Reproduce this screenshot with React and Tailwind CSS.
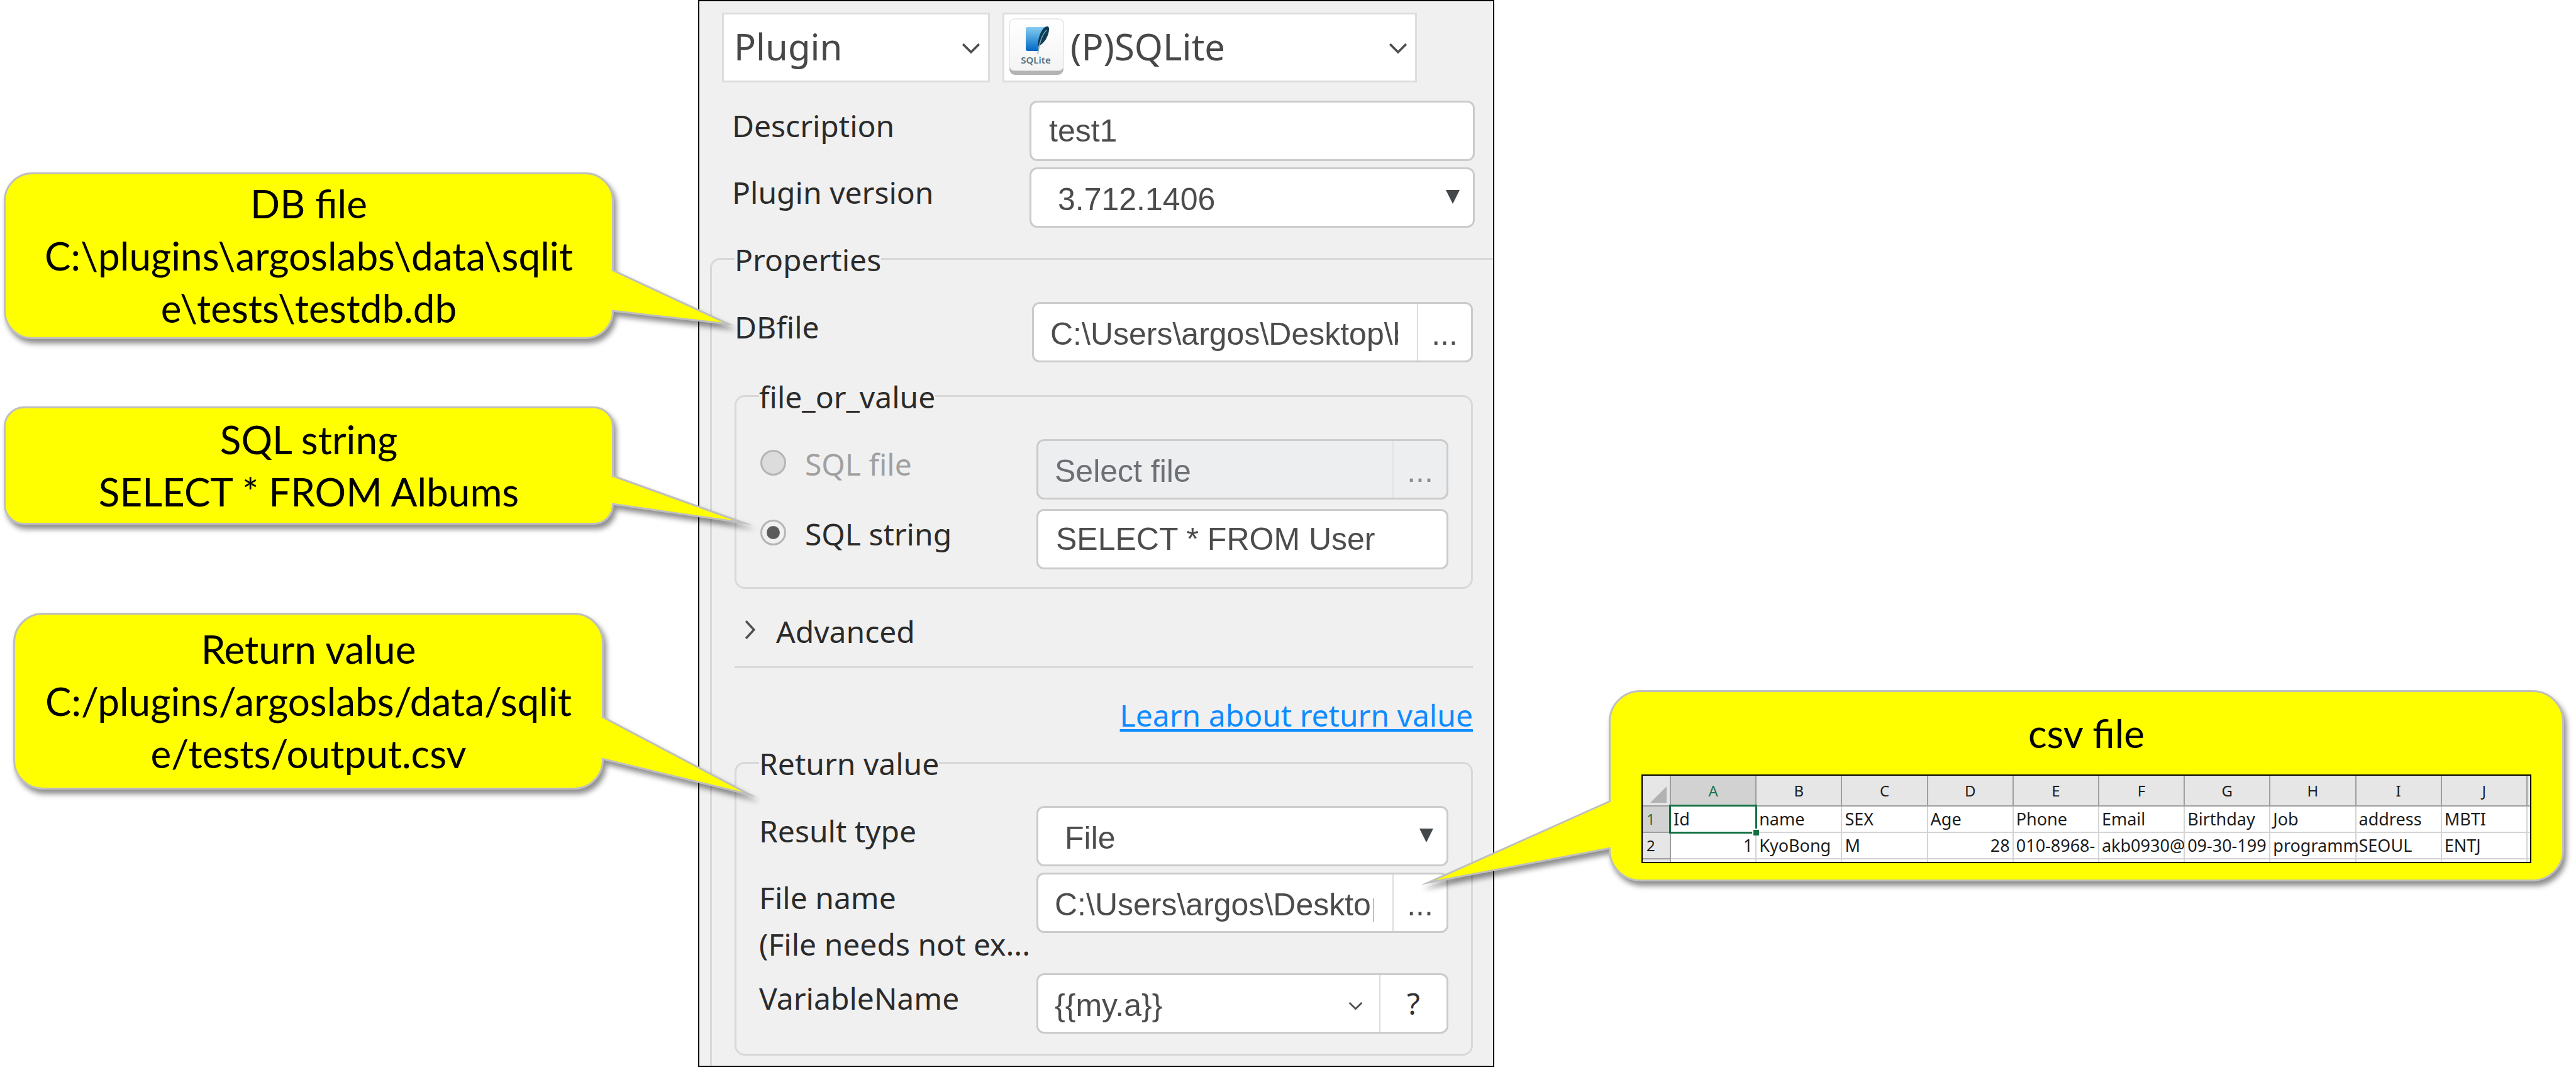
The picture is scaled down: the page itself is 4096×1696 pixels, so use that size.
import React from "react";

const LABEL = "font-['Noto_Sans',sans-serif] text-[48px] leading-[64px] text-[#2b2b2b]";
const BOX = "rounded-xl border-[3px] border-[#cbcbcb] bg-white";
const VALUE = "font-['Liberation_Sans',sans-serif] text-[#4c4c4c] outline-none";

function Callout({ className, tail, children }) {
  return (
    <section
      className={`relative z-10 border-[3px] border-[#bfbfbf] bg-[#ffff00] text-center font-[Lato,sans-serif] text-[62px] leading-[83px] whitespace-nowrap text-black drop-shadow-[4px_7px_4px_rgba(0,0,0,0.45)] ${className}`}
    >
      {tail}
      {children}
    </section>
  );
}

function Tail({ className, d }) {
  return (
    <svg aria-hidden="true" className={`absolute top-0 h-1 w-1 overflow-visible ${className}`}>
      <path d={d} fill="#ffff00" stroke="#bfbfbf" strokeWidth="3" strokeMiterlimit="30" />
    </svg>
  );
}

function Chevron({ className, d = "M2 2 L14 14 L26 2", box = "0 0 28 17" }) {
  return (
    <svg aria-hidden="true" viewBox={box} className={`pointer-events-none absolute ${className}`}>
      <path d={d} fill="none" stroke="#505050" strokeWidth="3.4" />
    </svg>
  );
}

function DropArrow() {
  return (
    <svg
      aria-hidden="true"
      viewBox="0 0 22 22"
      className="pointer-events-none absolute top-9 right-6 w-[22px]"
    >
      <path d="M0 0 H22 L11 22 Z" fill="#42474a" />
    </svg>
  );
}

function Row({ id, label, labelClass, children, className = "" }) {
  return (
    <div className={`flex items-start ${className}`}>
      <label htmlFor={id} className={`shrink-0 pt-2 ${LABEL} ${labelClass}`}>
        {label}
      </label>
      <div className="min-w-0 flex-1">{children}</div>
    </div>
  );
}

function PathBox({ id, value, placeholder, disabled }) {
  const tone = disabled ? "bg-[#eceef0]" : "bg-white";
  return (
    <div className={`flex h-24 w-full overflow-hidden rounded-xl border-[3px] border-[#cbcbcb] ${tone}`}>
      <input
        id={id}
        type="text"
        defaultValue={value}
        placeholder={placeholder}
        disabled={disabled}
        className={`min-w-0 flex-1 pt-1.5 pr-[30px] pl-[26px] text-[50px] placeholder:text-[#6c7074] placeholder:opacity-100 ${VALUE}`}
      />
      <button
        type="button"
        aria-label="Browse"
        disabled={disabled}
        className={`w-[86px] border-l-2 border-[#dcdcdc] pt-1.5 text-[50px] ${VALUE} ${
          disabled ? "opacity-60" : ""
        }`}
      >
        ...
      </button>
    </div>
  );
}

function SelectBox({ id, value }) {
  return (
    <div className="relative">
      <select
        id={id}
        className={`h-24 w-full appearance-none px-[42px] pt-1.5 text-[50px] ${BOX} ${VALUE}`}
      >
        <option>{value}</option>
      </select>
      <DropArrow />
    </div>
  );
}

function SqliteIcon() {
  return (
    <svg
      role="img"
      aria-label="SQLite"
      viewBox="0 0 88 92"
      className="pointer-events-none absolute top-[9px] left-2.5 w-[88px]"
    >
      <defs>
        <linearGradient id="book" x1="0" y1="0" x2="0" y2="1">
          <stop offset="0" stopColor="#86cdf2" />
          <stop offset="1" stopColor="#0068c4" />
        </linearGradient>
        <linearGradient id="tile" x1="0" y1="0" x2="0" y2="1">
          <stop offset="0" stopColor="#ffffff" />
          <stop offset="1" stopColor="#f4f4f4" />
        </linearGradient>
      </defs>
      <rect x="1" y="6" width="86" height="84" rx="9" fill="#b4b4b4" />
      <rect x="1" y="1" width="86" height="82" rx="8" fill="url(#tile)" stroke="#e4e4e4" strokeWidth="1.5" />
      <path d="M30 14 H58 Q48 25 48 39 L47 52 H30 Q27 52 27 49 V17 Q27 14 30 14 Z" fill="url(#book)" />
      <path d="M62 13 C55 12 47 25 46 44 C55 43 65 27 64 15 Z" fill="#0d3a55" />
      <path d="M60 19 C54 25 50 33 46 57" fill="none" stroke="#7fa6b8" strokeWidth="1.5" />
      <text
        x="43"
        y="72"
        textAnchor="middle"
        className="font-['Noto_Sans',sans-serif] text-[15px] font-semibold"
        fill="#4f7386"
      >
        SQLite
      </text>
    </svg>
  );
}

const RADIO =
  "relative mt-[17px] ml-0.5 h-[41px] w-[41px] shrink-0 appearance-none rounded-full border-[3px] border-[#b5b5b5] bg-[#dcdcdc] checked:bg-[#f0f0f0] checked:before:absolute checked:before:inset-[7px] checked:before:rounded-full checked:before:bg-[#5c5c5c]";

const FIELDSET = "min-w-0 rounded-2xl border-[3px] border-[#d8d8d8]";

function PluginPanel() {
  return (
    <main className="flex min-h-screen flex-col overflow-hidden border-2 border-black bg-[#f0f0f0]">
      <header className="mt-[18px] ml-9 flex gap-5">
        <div className="relative w-[426px]">
          <select
            aria-label="Step kind"
            className="h-[111px] w-full appearance-none border-[3px] border-[#dddddd] bg-white pb-1 pl-4 font-['Noto_Sans',sans-serif] text-[58px] text-[#484848]"
          >
            <option>Plugin</option>
          </select>
          <Chevron className="top-[48px] right-[15px] w-[30px]" />
        </div>
        <div className="relative w-[659px]">
          <select
            aria-label="Plugin name"
            className="h-[111px] w-full appearance-none border-[3px] border-[#dddddd] bg-white pb-1 pl-[105px] font-['Noto_Sans',sans-serif] text-[58px] text-[#484848]"
          >
            <option>(P)SQLite</option>
          </select>
          <SqliteIcon />
          <Chevron className="top-[48px] right-[15px] w-[30px]" />
        </div>
      </header>

      <div className="mt-[29px] mr-[29px] ml-[52px] flex flex-col gap-2.5">
        <Row id="description" label="Description" labelClass="w-[473px]">
          <input
            id="description"
            type="text"
            defaultValue="test1"
            className={`h-24 w-full px-7 text-[50px] ${BOX} ${VALUE}`}
          />
        </Row>
        <Row id="version" label="Plugin version" labelClass="w-[473px]">
          <SelectBox id="version" value="3.712.1406" />
        </Row>
      </div>

      <fieldset className="mt-[15px] ml-[17px] min-w-0 flex-1 rounded-tl-2xl border-t-[3px] border-l-[3px] border-[#d8d8d8] pt-[35px] pr-8 pl-9">
        <legend className={`pt-1 ${LABEL}`}>Properties</legend>

        <Row id="dbfile" label="DBfile" labelClass="w-[473px]">
          <PathBox id="dbfile" value={"C:\\Users\\argos\\Desktop\\b"} />
        </Row>

        <fieldset className={`mt-[19px] px-9 pt-[35px] pb-7 ${FIELDSET}`}>
          <legend className={`pt-1 ${LABEL}`}>file_or_value</legend>
          <div className="flex items-start">
            <input id="sql-file" type="radio" name="sql" className={RADIO} />
            <label
              htmlFor="sql-file"
              className="w-[398px] shrink-0 pt-2 pl-[30px] font-['Noto_Sans',sans-serif] text-[48px] leading-[64px] text-[#a0a0a0]"
            >
              SQL file
            </label>
            <div className="min-w-0 flex-1">
              <PathBox id="sql-file-path" placeholder="Select file" disabled />
            </div>
          </div>
          <div className="mt-[15px] flex items-start">
            <input id="sql-string" type="radio" name="sql" defaultChecked className={RADIO} />
            <label htmlFor="sql-string" className={`w-[398px] shrink-0 pt-2 pl-[30px] ${LABEL}`}>
              SQL string
            </label>
            <input
              type="text"
              aria-label="SQL string"
              defaultValue="SELECT * FROM User"
              className={`h-24 w-full min-w-0 flex-1 px-7 text-[50px] ${BOX} ${VALUE}`}
            />
          </div>
        </fieldset>

        <button type="button" className={`relative mt-9 block pl-[66px] text-left ${LABEL}`}>
          <Chevron className="top-[13px] left-4 h-[32px] w-[17px]" d="M2 2 L14 15 L2 28" box="0 0 16 30" />
          Advanced
        </button>
        <hr className="mt-[23px] border-t-[3px] border-[#d8d8d8]" />

        <div className="mt-[43px] text-right">
          <a
            href="#return-value"
            className="block font-['Noto_Sans',sans-serif] text-[48px] leading-[64px] text-[#0d8bff] underline decoration-[4px] underline-offset-4"
          >
            Learn about return value
          </a>
        </div>

        <fieldset id="return-value" className={`mt-[9px] px-9 pt-[35px] pb-8 ${FIELDSET}`}>
          <legend className={`pt-1 ${LABEL}`}>Return value</legend>
          <div className="flex flex-col gap-[10px]">
            <Row id="result-type" label="Result type" labelClass="w-[441px]">
              <SelectBox id="result-type" value="File" />
            </Row>
            <Row
              id="file-name"
              labelClass="w-[441px]"
              className="pb-1"
              label={
                <>
                  <span className="block">File name</span>
                  <span className="mt-2.5 block whitespace-nowrap">(File needs not ex...</span>
                </>
              }
            >
              <PathBox id="file-name" value={"C:\\Users\\argos\\Desktop"} />
            </Row>
            <Row id="variable" label="VariableName" labelClass="w-[441px]">
              <div className={`relative flex h-24 w-full overflow-hidden ${BOX}`}>
                <select
                  id="variable"
                  className={`min-w-0 flex-1 appearance-none px-[26px] pt-1.5 text-[50px] ${VALUE}`}
                >
                  <option>{"{{my.a}}"}</option>
                </select>
                <Chevron className="top-[42px] right-[133px] w-[23px]" />
                <button
                  type="button"
                  aria-label="Help"
                  className="w-[107px] border-l-2 border-[#dcdcdc] font-['Noto_Sans',sans-serif] text-[48px] text-[#333333]"
                >
                  ?
                </button>
              </div>
            </Row>
          </div>
        </fieldset>
      </fieldset>
    </main>
  );
}

const COLUMNS = ["A", "B", "C", "D", "E", "F", "G", "H", "I", "J"];
const HEAD = ["Id", "name", "SEX", "Age", "Phone", "Email", "Birthday", "Job", "address", "MBTI"];
const DATA = ["1", "KyoBong", "M", "28", "010-8968-", "akb0930@", "09-30-199", "programm", "SEOUL", "ENTJ"];

function Sheet() {
  const cell = "border-r-2 border-b-2 border-[#d4d4d4] p-0 px-1";
  return (
    <div className="mt-6 overflow-hidden border-2 border-black bg-white">
      <table className="w-full table-fixed border-separate border-spacing-0 text-left font-['Noto_Sans',sans-serif] text-[27px] leading-[38px] text-[#1c1c1c]">
        <colgroup>
          <col className="w-[45px]" />
          {COLUMNS.map((c) => (
            <col key={c} />
          ))}
          <col className="w-1" />
        </colgroup>
        <thead>
          <tr className="h-[49px] bg-[#e6e6e6] text-center text-[24px]">
            <th aria-label="Select all" className="border-r-2 border-b-2 border-[#9e9e9e] p-0">
              <svg aria-hidden="true" viewBox="0 0 26 26" className="mt-3 ml-3 w-[26px]">
                <path d="M26 0 V26 H0 Z" fill="#b2b2b2" />
              </svg>
            </th>
            {COLUMNS.map((c) => (
              <th
                key={c}
                scope="col"
                className={`border-r-2 border-b-2 border-[#9e9e9e] p-0 font-normal ${
                  c === "A" ? "bg-[#d2d2d2] text-[#217346]" : ""
                }`}
              >
                {c}
              </th>
            ))}
            <th aria-hidden="true" className="border-b-2 border-[#9e9e9e] p-0" />
          </tr>
        </thead>
        <tbody>
          <tr className="h-[42px]">
            <th
              scope="row"
              className="border-r-2 border-b-2 border-[#9e9e9e] bg-[#d2d2d2] p-0 pl-1.5 text-[24px] font-normal text-[#217346]"
            >
              1
            </th>
            {HEAD.map((h, i) =>
              i === 0 ? (
                <td key={h} className="relative border-r-2 border-b-2 border-[#d4d4d4] p-0 px-1">
                  {h}
                  <span className="absolute -top-[3px] -right-[3px] -bottom-[3px] -left-[3px] border-[3px] border-[#127040]" />
                  <span className="absolute -right-[6px] -bottom-[6px] h-[11px] w-[11px] border-2 border-r-0 border-b-0 border-white bg-[#127040]" />
                </td>
              ) : (
                <td key={h} className={cell}>
                  {h}
                </td>
              )
            )}
            <td className="border-b-2 border-[#d4d4d4] p-0" />
          </tr>
          <tr className="h-[42px]">
            <th
              scope="row"
              className="border-r-2 border-b-2 border-[#9e9e9e] bg-[#e6e6e6] p-0 pl-1.5 text-[24px] font-normal"
            >
              2
            </th>
            {DATA.map((d, i) => (
              <td key={d} className={`${cell} ${i === 0 || i === 3 ? "text-right" : ""}`}>
                {d}
              </td>
            ))}
            <td className="border-b-2 border-[#d4d4d4] p-0" />
          </tr>
          <tr aria-hidden="true" className="h-1">
            <td className="border-r-2 border-[#9e9e9e] bg-[#e6e6e6] p-0" />
            {COLUMNS.map((c) => (
              <td key={c} className="border-r-2 border-[#d4d4d4] p-0" />
            ))}
            <td className="p-0" />
          </tr>
        </tbody>
      </table>
    </div>
  );
}

export default function App() {
  return (
    <div className="grid min-h-screen grid-cols-[1110fr_1266fr_1720fr] bg-white">
      <aside className="flex flex-col pt-[274px]">
        <Callout
          className="mr-[134px] ml-1.5 rounded-[45px] py-[5px]"
          tail={<Tail className="left-full" d="M0 152 L185 238 L0 217" />}
        >
          DB file
          <br />
          {"C:\\plugins\\argoslabs\\data\\sqlit"}
          <br />
          {"e\\tests\\testdb.db"}
        </Callout>
        <Callout
          className="mt-[107px] mr-[134px] ml-1.5 rounded-[32px] py-2"
          tail={<Tail className="left-full" d="M0 107 L209 182 L0 152" />}
        >
          SQL string
          <br />
          SELECT * FROM Albums
        </Callout>
        <Callout
          className="mt-[140px] mr-[150px] ml-[21px] rounded-[47px] py-[13px]"
          tail={<Tail className="left-full" d="M0 162 L235 286 L0 229" />}
        >
          Return value
          <br />
          C:/plugins/argoslabs/data/sqlit
          <br />
          e/tests/output.csv
        </Callout>
      </aside>

      <PluginPanel />

      <aside className="min-w-0 pt-[1097px]">
        <Callout
          className="mr-[19px] ml-[182px] rounded-[50px] px-[49px] pt-6 pb-[26px]"
          tail={<Tail className="left-0" d="M0 173 L-290 303 L0 248" />}
        >
          <h2>csv file</h2>
          <Sheet />
        </Callout>
      </aside>
    </div>
  );
}
